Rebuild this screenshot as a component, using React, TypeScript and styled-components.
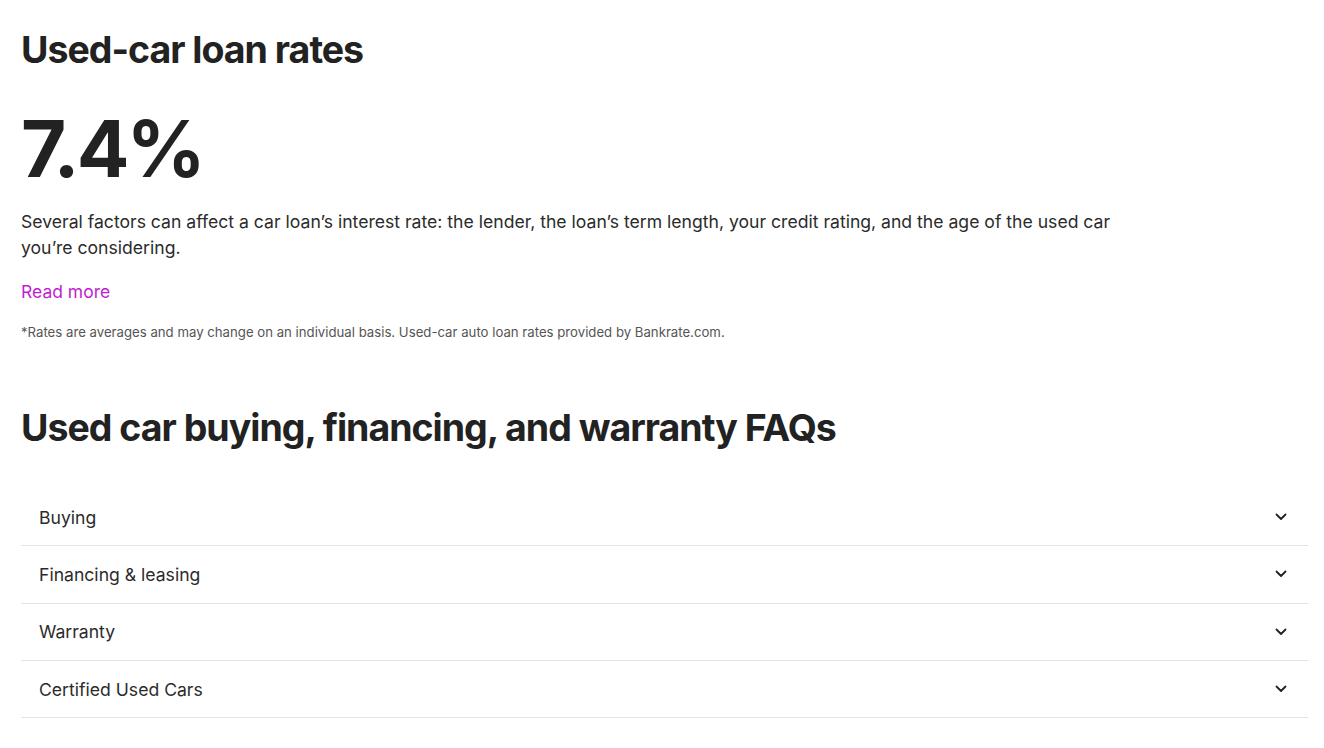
import styled, { createGlobalStyle } from 'styled-components';

const GlobalStyle = createGlobalStyle`
  body {
    margin: 0;
    background: #ffffff;
    font-family: Inter, 'Liberation Sans', sans-serif;
    color: #2b2b2b;
  }
`;

const faqs = ['Buying', 'Financing & leasing', 'Warranty', 'Certified Used Cars'];

function Chevron() {
  return (
    <svg width="12" height="8" viewBox="0 0 12 8" fill="none">
      <path d="M1.5 1.5L6 6L10.5 1.5" stroke="#222" strokeWidth="1.8" strokeLinecap="round" strokeLinejoin="round" />
    </svg>
  );
}

export default function App() {
  return (
    <>
      <GlobalStyle />
      <Page>
        <RatesSection>
          <Heading>Used-car loan rates</Heading>
          <BigRate>7.4%</BigRate>
          <Body>
            Several factors can affect a car loan’s interest rate: the lender, the loan’s term length, your credit
            rating, and the age of the used car you’re considering.
          </Body>
          <ReadMore href="#">Read more</ReadMore>
          <Footnote>
            *Rates are averages and may change on an individual basis. Used-car auto loan rates provided by Bankrate.com.
          </Footnote>
        </RatesSection>
        <FaqSection>
          <Heading>Used car buying, financing, and warranty FAQs</Heading>
          <FaqList>
            {faqs.map((f) => (
              <FaqRow key={f}>
                <FaqLabel>{f}</FaqLabel>
                <Chevron />
              </FaqRow>
            ))}
          </FaqList>
        </FaqSection>
      </Page>
    </>
  );
}

const Page = styled.div`
  padding: 24px 16px 0 21px;
`;

const RatesSection = styled.section`
  display: flex;
  flex-direction: column;
  align-items: flex-start;
`;

const Heading = styled.h2`
  margin: 0;
  font-family: Inter, 'Liberation Sans', sans-serif;
  font-weight: 700;
  font-size: 37.5px;
  line-height: 52px;
  letter-spacing: -1px;
  color: #222;
`;

const BigRate = styled.div`
  margin-top: 33px;
  font-weight: 700;
  font-size: 78px;
  line-height: 80px;
  letter-spacing: -3px;
  color: #222;
`;

const Body = styled.p`
  margin: 20px 0 0;
  max-width: 1120px;
  font-size: 17.6px;
  line-height: 26px;
  color: #2b2b2b;
`;

const ReadMore = styled.a`
  margin-top: 18px;
  font-size: 17.5px;
  line-height: 26px;
  color: #c01fd0;
  text-decoration: none;
`;

const Footnote = styled.p`
  margin: 18px 0 0;
  font-size: 13.2px;
  line-height: 18px;
  color: #555;
`;

const FaqSection = styled.section`
  margin-top: 61px;
`;

const FaqList = styled.div`
  margin-top: 35px;
`;

const FaqRow = styled.div`
  display: flex;
  align-items: center;
  justify-content: space-between;
  height: 56.33px;
  padding: 0 21px 0 18px;
  border-bottom: 1px solid #e4e4e4;
`;

const FaqLabel = styled.span`
  font-size: 17.6px;
  color: #2b2b2b;
`;
